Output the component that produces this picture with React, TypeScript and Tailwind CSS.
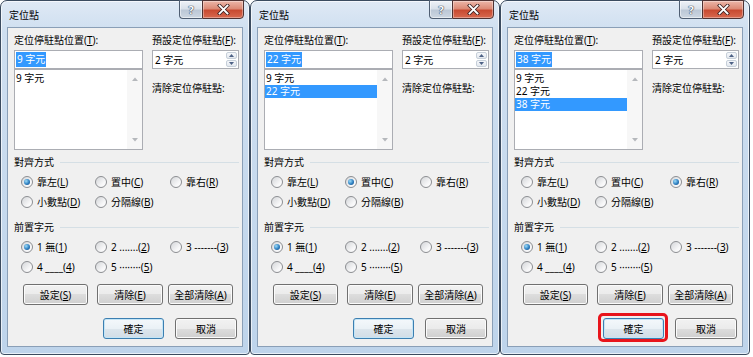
import React from 'react';

// Win7 "定位點" (tab stops) dialog, shown three times in a row
type DialogProps = {
  stops: string[];
  current: string;
  selected: number; // index in stops, -1 for none
  align: number;
  focusOk?: boolean;
};

const U: React.FC<{ children: React.ReactNode }> = ({ children }) => (
  <span className="underline decoration-1 underline-offset-[1px]">{children}</span>
);

const Radio: React.FC<{ checked?: boolean; children: React.ReactNode }> = ({ checked, children }) => (
  <div className="flex items-center h-[20px]">
    <span className="w-[12px] h-[12px] shrink-0 rounded-full border border-[#8c8e92] bg-[linear-gradient(135deg,#d4d6d9,#f8f8f9_70%)] flex items-center justify-center">
      {checked && (
        <span className="w-[6px] h-[6px] rounded-full bg-[radial-gradient(circle_at_35%_35%,#9edcf8,#2d7fc1_55%,#17457a)]" />
      )}
    </span>
    <span className="ml-[4px] whitespace-nowrap">{children}</span>
  </div>
);

const Button: React.FC<{ w: string; isDefault?: boolean; children: React.ReactNode }> = ({ w, isDefault, children }) => (
  <div
    className={`${w} h-[21px] rounded-[3px] border flex items-center justify-center ${
      isDefault
        ? 'border-[#3c7fb1] shadow-[inset_0_0_0_1px_#c4e5f6] bg-[linear-gradient(180deg,#f4f8fb_0%,#eaf1f6_50%,#dde6ed_50%,#d2dde6_100%)]'
        : 'border-[#707070] shadow-[inset_0_0_0_1px_#fbfbfb] bg-[linear-gradient(180deg,#f2f2f2_0%,#ebebeb_50%,#dddddd_50%,#cfcfcf_100%)]'
    }`}
  >
    {children}
  </div>
);

const GroupLabel: React.FC<{ children: React.ReactNode }> = ({ children }) => (
  <div className="flex items-center h-[14px]">
    <span>{children}</span>
    <span className="flex-1 h-px bg-[#d5dfe5] ml-[6px]" />
  </div>
);

const Dialog: React.FC<DialogProps> = ({ stops, current, selected, align, focusOk }) => {
  const aligns = [
    <>靠左(<U>L</U>)</>,
    <>置中(<U>C</U>)</>,
    <>靠右(<U>R</U>)</>,
    <>小數點(<U>D</U>)</>,
    <>分隔線(<U>B</U>)</>,
  ];
  const leaders = [
    <>1 無(<U>1</U>)</>,
    <>2 .......(<U>2</U>)</>,
    <>3 -------(<U>3</U>)</>,
    <>4 ____(<U>4</U>)</>,
    <>5 ········(<U>5</U>)</>,
  ];

  return (
    <div className="w-[250px] h-[355px] shrink-0 flex flex-col rounded-t-[7px] rounded-b-[4px] border border-[#3b4b5f] shadow-[inset_0_0_0_1px_rgba(255,255,255,0.65)] bg-[linear-gradient(180deg,#dfe9f5_0%,#cfdff0_30px,#bed4eb_100%)] px-[6px] pb-[7px]">
      {/* title bar */}
      <div className="h-[26px] shrink-0 flex items-start">
        <div className="pl-[2px] pt-[7px] text-[10px] leading-[14px] text-black">定位點</div>
        <div className="ml-auto flex -mt-px mr-[-1px]">
          <div className="w-[23px] h-[19px] rounded-bl-[4px] border border-[#4f5e72] border-r-0 bg-[linear-gradient(180deg,#eef2f7_0%,#d9e1ea_45%,#bcc8d6_55%,#cdd7e2_100%)] shadow-[inset_0_0_0_1px_rgba(255,255,255,0.5)] flex items-center justify-center">
            <span className="text-[11px] font-bold leading-none text-white [text-shadow:0_0_1px_#34465c,0_0_1px_#34465c,0_0_1px_#34465c]">?</span>
          </div>
          <div className="w-[42px] h-[19px] rounded-br-[4px] border border-[#4f3232] bg-[linear-gradient(180deg,#ecb6a8_0%,#dc8a76_45%,#c84a31_55%,#d8694f_100%)] shadow-[inset_0_0_0_1px_rgba(255,255,255,0.35)] flex items-center justify-center">
            <svg width="13" height="11" viewBox="0 0 13 11">
              <path d="M2.5 1.5 L10.5 9.5 M10.5 1.5 L2.5 9.5" stroke="#3a2020" strokeWidth="3.4" strokeLinecap="square" />
              <path d="M2.5 1.5 L10.5 9.5 M10.5 1.5 L2.5 9.5" stroke="#ffffff" strokeWidth="1.8" strokeLinecap="square" />
            </svg>
          </div>
        </div>
      </div>

      {/* client area */}
      <div className="flex-1 border border-[#8a9fb7] bg-[#f0f0f0] pl-[6px] pr-[3px] pt-[5px] text-[10px] leading-[14px] text-black">
        <div className="flex gap-[9px]">
          <div className="w-[129px] flex flex-col">
            <div className="h-[14px] whitespace-nowrap">定位停駐點位置(<U>T</U>):</div>
            <div className="mt-[3px] h-[19px] border border-[#abadb3] bg-white flex items-center pl-px">
              <span className="bg-[#3399ff] text-white px-[1px] leading-[15px]">{current}</span>
            </div>
            <div className="h-[81px] border border-[#abadb3] bg-white flex">
              <div className="flex-1 pt-[2px]">
                {stops.map((s, i) => (
                  <div
                    key={s}
                    className={`h-[13px] leading-[13px] pl-[1px] ${i === selected ? 'bg-[#3399ff] text-white' : ''}`}
                  >
                    {s}
                  </div>
                ))}
              </div>
              <div className="w-[15px] flex flex-col items-center justify-between py-[7px] bg-[#f7f7f7]">
                <svg width="6" height="4" viewBox="0 0 6 4"><path d="M0 4 L3 0.5 L6 4 Z" fill="#b5b8bc" /></svg>
                <svg width="6" height="4" viewBox="0 0 6 4"><path d="M0 0 L3 3.5 L6 0 Z" fill="#b5b8bc" /></svg>
              </div>
            </div>
          </div>
          <div className="w-[87px] flex flex-col">
            <div className="h-[14px] whitespace-nowrap">預設定位停駐點(<U>F</U>):</div>
            <div className="mt-[3px] h-[19px] border border-[#abadb3] bg-white flex">
              <div className="flex-1 flex items-center pl-[2px]">2 字元</div>
              <div className="w-[13px] flex flex-col gap-px p-px">
                <div className="flex-1 rounded-[2px] border border-[#c6cfd9] bg-[linear-gradient(180deg,#f5f7fa,#e3e8ee)] flex items-center justify-center">
                  <svg width="5" height="3" viewBox="0 0 5 3"><path d="M0 3 L2.5 0 L5 3 Z" fill="#4d6185" /></svg>
                </div>
                <div className="flex-1 rounded-[2px] border border-[#c6cfd9] bg-[linear-gradient(180deg,#f5f7fa,#e3e8ee)] flex items-center justify-center">
                  <svg width="5" height="3" viewBox="0 0 5 3"><path d="M0 0 L2.5 3 L5 0 Z" fill="#4d6185" /></svg>
                </div>
              </div>
            </div>
            <div className="mt-[12px] h-[14px] whitespace-nowrap">清除定位停駐點:</div>
          </div>
        </div>

        <div className="mt-[5px]">
          <GroupLabel>對齊方式</GroupLabel>
        </div>
        <div className="mt-[3px] pl-[7px] grid grid-cols-[74px_75px_auto]">
          {aligns.map((a, i) => (
            <Radio key={i} checked={i === align}>{a}</Radio>
          ))}
        </div>

        <div className="mt-[8px]">
          <GroupLabel>前置字元</GroupLabel>
        </div>
        <div className="mt-[3px] pl-[7px] grid grid-cols-[74px_75px_auto]">
          {leaders.map((l, i) => (
            <Radio key={i} checked={i === 0}>{l}</Radio>
          ))}
        </div>

        <div className="mt-[7px] flex pl-[9px]">
          <Button w="w-[65px]">設定(<U>S</U>)</Button>
          <div className="ml-[9px]"><Button w="w-[66px]">清除(<U>E</U>)</Button></div>
          <div className="ml-[5px]"><Button w="w-[65px]">全部清除(<U>A</U>)</Button></div>
        </div>

        <div className="mt-[13px] flex pl-[89px]">
          <div className="relative">
            <Button w="w-[61px]" isDefault>確定</Button>
            {focusOk && (
              <div className="absolute -left-[5px] -right-[4px] -top-[5px] -bottom-[3px] border-[3px] border-[#e8141b] rounded-[5px]" />
            )}
          </div>
          <div className="ml-[11px]"><Button w="w-[62px]">取消</Button></div>
        </div>
      </div>
    </div>
  );
};

const App: React.FC = () => {
  return (
    <div className="w-[753px] h-[357px] bg-white flex font-['Segoe_UI','Noto_Sans','Noto_Sans_CJK_TC',sans-serif]">
      <Dialog stops={['9 字元']} current="9 字元" selected={-1} align={0} />
      <Dialog stops={['9 字元', '22 字元']} current="22 字元" selected={1} align={1} />
      <Dialog stops={['9 字元', '22 字元', '38 字元']} current="38 字元" selected={2} align={2} focusOk />
    </div>
  );
};

export default App;
